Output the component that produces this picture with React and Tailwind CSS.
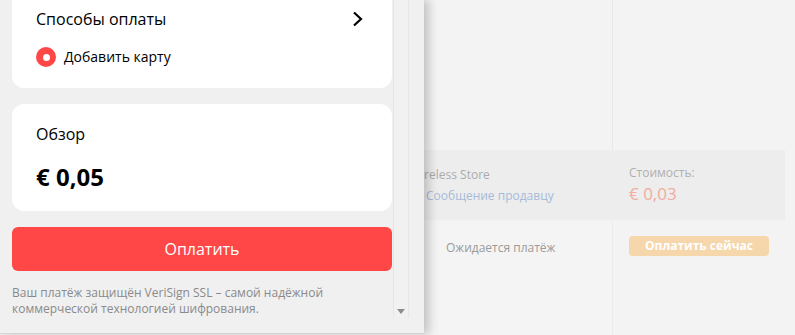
import React from "react";

export default function App() {
  return (
    <div
      className="relative flex h-[335px] w-[795px] overflow-hidden bg-[#f3f3f3]"
      style={{ fontFamily: '"Open Sans", "Liberation Sans", sans-serif' }}
    >
      {/* Left panel */}
      <div className="relative z-10 flex h-[334px] w-[424px] shrink-0 overflow-hidden border-b border-[#d4d4d4] bg-[#f0f0f0] shadow-[5px_0_9px_rgba(0,0,0,0.2)]">
        <div className="w-[392px] shrink-0 pl-3">
          <div className="-mt-[17px] flex flex-col">
            {/* Card 1 */}
            <div className="flex flex-col gap-4 rounded-xl bg-white px-6 pb-[21px] pt-6">
              <div className="flex h-6 items-center justify-between">
                <span className="text-[16px] leading-6 text-black">Способы оплаты</span>
                <svg width="12" height="16" viewBox="0 0 12 16" className="mr-[4px]">
                  <polyline points="2,1.5 9,8 2,14.5" fill="none" stroke="#000" strokeWidth="2.2" />
                </svg>
              </div>
              <div className="flex h-5 items-center gap-2">
                <span className="flex h-5 w-5 items-center justify-center rounded-full bg-[#ff4747]">
                  <span className="h-[7px] w-[7px] rounded-full bg-white" />
                </span>
                <span className="text-[14px] leading-5 text-black">Добавить карту</span>
              </div>
            </div>

            {/* Card 2 */}
            <div className="mt-4 flex flex-col gap-4 rounded-xl bg-white px-6 pb-[19px] pt-[18px]">
              <span className="text-[16px] leading-6 text-black">Обзор</span>
              <span className="text-[24px] font-bold leading-[30px] text-black">€ 0,05</span>
            </div>

            {/* Pay button */}
            <button className="mt-4 flex h-11 items-center justify-center rounded-md bg-[#ff4747] text-[16px] text-white">
              Оплатить
            </button>

            <p className="mt-[14px] text-[12px] leading-4 text-[#8a8a8a]">
              Ваш платёж защищён VeriSign SSL – самой надёжной
              <br />
              коммерческой технологией шифрования.
            </p>
          </div>
        </div>
        {/* Scrollbar */}
        <div className="relative ml-[1px] h-[318px] w-[16px] border-x border-[#e6e6e6] bg-[#f1f1f1]">
          <svg width="8" height="5" viewBox="0 0 8 5" className="absolute bottom-[4px] left-[3px]">
            <polygon points="0,0 8,0 4,5" fill="#8c8c8c" />
          </svg>
        </div>
      </div>

      {/* Right background content */}
      <div className="flex min-w-0 flex-1 flex-col overflow-hidden">
        <div className="flex h-[150px]">
          <div className="w-[189px] border-r border-[#e8e8e8]" />
          <div className="flex-1" />
        </div>
        <div className="mr-[10px] flex h-[70px] bg-[#ededed]">
          <div className="-ml-[14px] flex w-[203px] flex-col justify-center">
            <div className="whitespace-nowrap text-[12px] leading-[21px] text-[#ababab]">Wireless Store</div>
            <div className="flex whitespace-nowrap text-[12px] leading-[21px] text-[#a6bbd9]">
              <span className="w-[16px]" />
              Сообщение продавцу
            </div>
          </div>
          <div className="ml-[16px] flex flex-col justify-center">
            <div className="text-[12px] leading-[18px] text-[#b0b0b0]">Стоимость:</div>
            <div className="text-[17px] leading-6 text-[#f2ab9e]">€ 0,03</div>
          </div>
        </div>
        <div className="mt-[2px] flex flex-1">
          <div className="w-[14px]" />
          <div className="w-[175px] border-r border-[#ebebeb] bg-[#f4f4f4] pl-2 pt-3">
            <span className="text-[12px] leading-5 text-[#9a9a9a]">Ожидается платёж</span>
          </div>
          <div className="flex-1 pl-4 pt-[14px]">
            <div className="flex h-[20px] w-[140px] items-center justify-center rounded-sm bg-[#f6d6ab] text-[12px] font-bold text-white">
              Оплатить сейчас
            </div>
          </div>
        </div>
      </div>
    </div>
  );
}
